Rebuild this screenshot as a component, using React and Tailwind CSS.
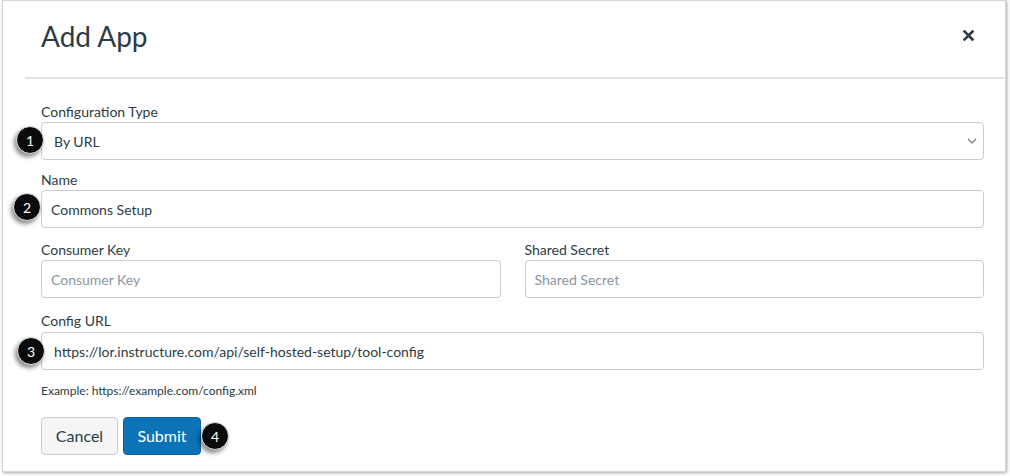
import React from "react";

const textColor = "text-[#2d3b45]";

function Badge({ n, className }) {
  return (
    <div
      className={
        "absolute flex h-[28px] w-[28px] items-center justify-center rounded-full border border-[#e6e6e6] bg-[#0b0b0b] text-[14px] text-white shadow-[-2px_3px_4px_rgba(0,0,0,0.45)] " +
        className
      }
    >
      {n}
    </div>
  );
}

function Field({ label, children, className = "" }) {
  return (
    <div className={className}>
      <div className={`h-[20px] text-[14px] leading-[20px] ${textColor}`}>{label}</div>
      {children}
    </div>
  );
}

export default function App() {
  return (
    <div className="h-[476px] w-[1010px] overflow-hidden bg-white font-['Lato','Liberation_Sans',sans-serif]">
      <div className="ml-[2px] flex h-[472px] w-[1004px] flex-col border border-[#d5d5d5] bg-white shadow-[1px_1px_3px_rgba(0,0,0,0.35)]">
        {/* header */}
        <div className="flex h-[76px] items-start justify-between pl-[38px] pr-[31px]">
          <h1 className={`mt-[18px] text-[28px] leading-[34px] ${textColor}`}>Add App</h1>
          <button className="mt-[29px] text-[#2d3b45]">
            <svg width="11" height="11" viewBox="0 0 11 11">
              <path d="M1.5 1.5 L9.5 9.5 M9.5 1.5 L1.5 9.5" stroke="#2d3b45" strokeWidth="2.6" strokeLinecap="square" />
            </svg>
          </button>
        </div>
        <div className="ml-[22px] mr-[1px] h-[2px] bg-[#dfe3e6]" />

        {/* body */}
        <div className="pl-[38px] pr-[21px] pt-[23px]">
          <Field label="Configuration Type">
            <div className="relative">
              <div className={`flex h-[38px] items-center justify-between rounded-[4px] border border-[#c7cdd1] pl-[12px] pr-[6px] text-[14px] ${textColor}`}>
                <span>By URL</span>
                <svg width="10" height="6" viewBox="0 0 10 6">
                  <path d="M1 1 L5 5 L9 1" fill="none" stroke="#6b7780" strokeWidth="1.2" />
                </svg>
              </div>
              <Badge n="1" className="left-[-25px] top-[4px]" />
            </div>
          </Field>

          <Field label="Name" className="mt-[10px]">
            <div className="relative">
              <div className={`flex h-[38px] items-center rounded-[4px] border border-[#c7cdd1] pl-[9px] text-[14px] ${textColor}`}>
                Commons Setup
              </div>
              <Badge n="2" className="left-[-28px] top-[3px]" />
            </div>
          </Field>

          <div className="mt-[12px] grid grid-cols-2 gap-[24px]">
            <Field label="Consumer Key">
              <div className="flex h-[38px] items-center rounded-[4px] border border-[#c7cdd1] pl-[9px] text-[14px] text-[#8b969e]">
                Consumer Key
              </div>
            </Field>
            <Field label="Shared Secret">
              <div className="flex h-[38px] items-center rounded-[4px] border border-[#c7cdd1] pl-[9px] text-[14px] text-[#8b969e]">
                Shared Secret
              </div>
            </Field>
          </div>

          <Field label="Config URL" className="mt-[13px]">
            <div className="relative mt-[1px]">
              <div className={`flex h-[38px] items-center rounded-[4px] border border-[#c7cdd1] pl-[12px] text-[14px] ${textColor}`}>
                https://lor.instructure.com/api/self-hosted-setup/tool-config
              </div>
              <Badge n="3" className="left-[-24px] top-[5px]" />
            </div>
          </Field>

          <div className={`mt-[13px] text-[12px] leading-[16px] ${textColor}`}>
            Example: https://example.com/config.xml
          </div>

          <div className="relative mt-[18px] flex gap-[5px]">
            <button className={`h-[38px] w-[77px] rounded-[4px] border border-[#c7cdd1] bg-[#f5f5f5] text-[16px] ${textColor}`}>
              Cancel
            </button>
            <button className="h-[38px] w-[78px] rounded-[4px] border border-[#0a66a3] bg-[#0b73b6] text-[16px] text-white">
              Submit
            </button>
            <Badge n="4" className="left-[160px] top-[5px]" />
          </div>
        </div>
      </div>
    </div>
  );
}
